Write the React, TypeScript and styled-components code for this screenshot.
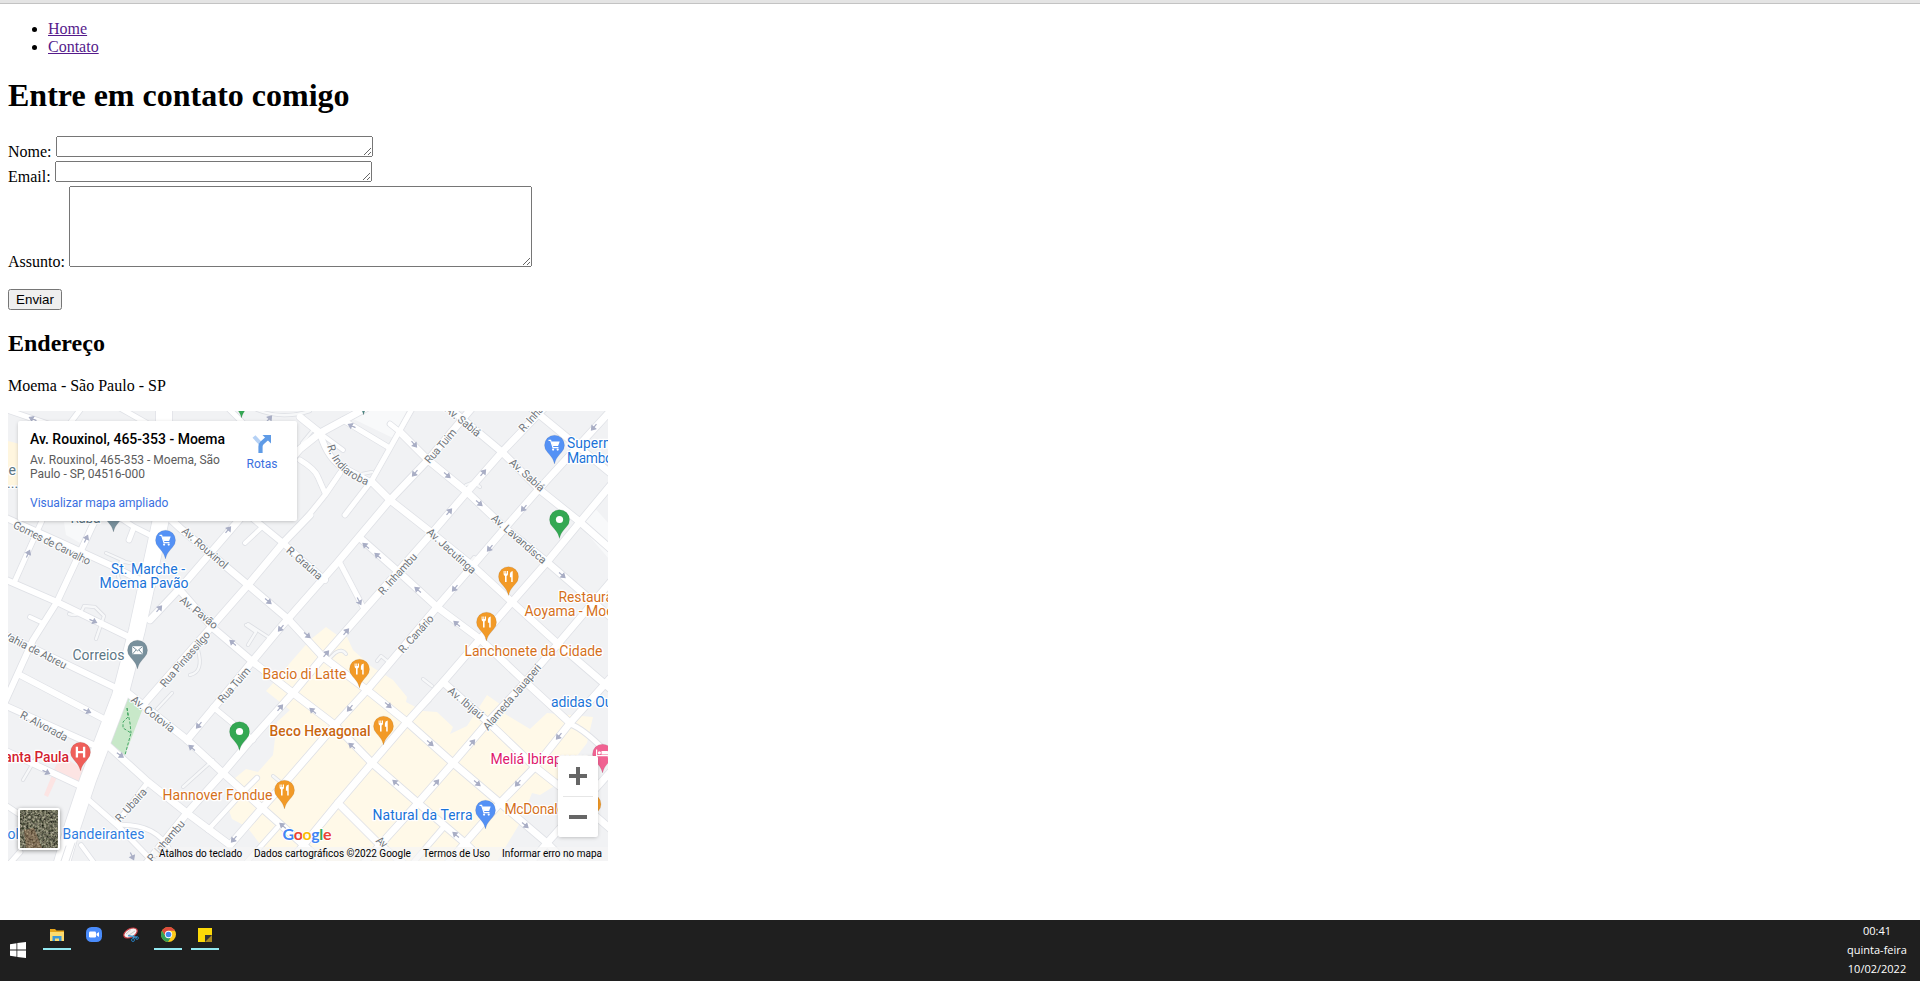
import React from "react";
import styled, { createGlobalStyle } from "styled-components";

const GlobalStyle = createGlobalStyle`
  body { margin: 0; background: #fff; color: #000; font-family: "Liberation Serif", "Times New Roman", serif; font-size: 16px; }
`;

const Screen = styled.div`
  display: flex;
  flex-direction: column;
  height: 981px;
  overflow: hidden;
`;

const BrowserEdge = styled.div`
  flex: none;
  height: 3px;
  background: #e4e4e4;
  border-bottom: 1px solid #c3c3c3;
`;

const Page = styled.main`
  flex: 1;
  min-height: 0;
  padding: 0 8px;
  overflow: hidden;
`;

const Nav = styled.ul`
  margin: 16px 0;
  padding-left: 40px;
  line-height: 18px;
`;

const NavLink = styled.a`
  color: #551a8b;
  text-decoration: underline;
`;

const Title = styled.h1`
  margin: 21.44px 0;
  font-size: 32px;
  line-height: 37px;
`;

const Subtitle = styled.h2`
  margin: 19.92px 0;
  font-size: 24px;
  line-height: 27px;
`;

const Paragraph = styled.p`
  margin: 16px 0;
  line-height: 18px;
`;

const Field = styled.textarea<{ $w: number; $h: number }>`
  box-sizing: border-box;
  width: ${(p) => p.$w}px;
  height: ${(p) => p.$h}px;
  overflow: auto;
`;

const Submit = styled.button`
  font-family: "Liberation Sans", Arial, sans-serif;
  font-size: 13.333px;
  width: 54px;
  height: 21px;
  padding: 1px 6px;
`;

const MapFrame = styled.div`
  position: relative;
  width: 600px;
  height: 450px;
  overflow: hidden;
  font-family: Roboto, sans-serif;
`;

const MapSvg = styled.svg`
  display: block;
  font-family: Roboto, sans-serif;
`;

const PlaceCard = styled.div`
  position: absolute;
  left: 10px;
  top: 10px;
  box-sizing: border-box;
  width: 279px;
  height: 100px;
  padding: 9px 12px;
  display: flex;
  justify-content: space-between;
  background: #fff;
  border-radius: 2px;
  box-shadow: 0 1px 4px -1px rgba(0, 0, 0, 0.3);
`;

const PlaceText = styled.div`
  width: 200px;
  white-space: nowrap;
`;

const PlaceName = styled.div`
  font-size: 14px;
  font-weight: 500;
  line-height: 18px;
`;

const PlaceAddress = styled.div`
  margin-top: 5px;
  font-size: 12px;
  line-height: 14px;
  color: #5b5b5b;
`;

const MapLink = styled.div`
  margin-top: 15px;
  font-size: 12px;
  line-height: 14px;
  color: #3a6fe0;
`;

const Directions = styled.div`
  display: flex;
  flex-direction: column;
  align-items: center;
  width: 46px;
  padding-top: 4px;
  font-size: 12px;
  line-height: 14px;
  color: #3a6fe0;
`;

const DirectionsIcon = styled.svg`
  margin-bottom: 3px;
`;

const ZoomPanel = styled.div`
  position: absolute;
  left: 550px;
  top: 345px;
  width: 40px;
  height: 81px;
  display: flex;
  flex-direction: column;
  align-items: center;
  background: #fff;
  border-radius: 2px;
  box-shadow: 0 1px 4px -1px rgba(0, 0, 0, 0.3);
`;

const ZoomButton = styled.div`
  flex: 1;
  display: flex;
  align-items: center;
`;

const ZoomDivider = styled.div`
  width: 30px;
  height: 1px;
  background: #e6e6e6;
`;

const Satellite = styled.div`
  position: absolute;
  left: 10px;
  top: 397px;
  width: 38px;
  height: 38px;
  border: 2px solid #fff;
  border-radius: 2px;
  overflow: hidden;
  background: #6b6b5d;
  box-shadow: 0 1px 4px rgba(0, 0, 0, 0.4);
`;

const Attribution = styled.div`
  position: absolute;
  right: 0;
  bottom: 0;
  height: 14px;
  display: flex;
  gap: 12px;
  padding: 0 6px;
  background: rgba(245, 245, 245, 0.7);
  font-size: 10px;
  line-height: 14px;
  white-space: nowrap;
`;

const Credit = styled.span<{ $w: number }>`
  width: ${(p) => p.$w}px;
`;

const Taskbar = styled.footer`
  flex: none;
  height: 61px;
  display: flex;
  align-items: flex-start;
  background: #1f1f1f;
`;

const StartButton = styled.div`
  width: 33px;
  padding: 22px 0 0 10px;
`;

const Apps = styled.div`
  display: flex;
  gap: 9px;
  flex: 1;
`;

const AppSlot = styled.div<{ $open?: boolean }>`
  width: 28px;
  height: 28px;
  display: flex;
  justify-content: center;
  align-items: flex-end;
  border-bottom: 2px solid ${(p) => (p.$open ? "#93e9f2" : "transparent")};
`;

const AppIcon = styled.svg`
  margin-bottom: 6px;
`;

const Clock = styled.div`
  width: 86px;
  padding-top: 1px;
  text-align: center;
  color: #fff;
  font-family: "Open Sans", "Noto Sans", sans-serif;
  font-size: 11px;
  line-height: 19px;
`;

type Road = { d: string; w?: number };

const mainAvenue = "M164 405L164 505L137 630L120 696L88 780L73 825L61 866";

const roads: Road[] = [
  { d: "M250 516L283 543L325 580", w: 6 },
  { d: "M261 528L245 543", w: 4 },
  { d: "M310 515L283 543L248 585L143 705" },
  { d: "M300 526L325 495L340 473", w: 5 },
  { d: "M187 740L280 628L337 563L390 500L428 460L471 409" },
  { d: "M545 407L502 452L467 492L432 533L365 609L323 657L293 693L250 741L223 773L187 813L146 864" },
  { d: "M615 406L582 442L538 490L505 528L475 563L437 607L367 690L335 725L290 777L262 808L230 845" },
  { d: "M615 480L580 522L547 562L512 602L480 639L443 682L407 722L372 763L338 803L288 864" },
  { d: "M614 578L557 645L520 688L488 722L453 763L418 803L380 845L363 864" },
  { d: "M614 674L570 723L535 767L500 803L465 843L447 864" },
  { d: "M614 768L547 843L530 863" },
  { d: "M443 828L412 864", w: 5 },
  { d: "M150 620L182 586L220 542L300 449L320 433L368 407" },
  { d: "M448 407L502 452L540 490L580 522L614 552" },
  { d: "M530 407L614 476" },
  { d: "M400 432L428 460L467 492L505 528L547 562L614 620" },
  { d: "M300 417L320 433M372 482L390 500L432 533L475 568L512 602L557 643L614 692" },
  { d: "M320 433Q328 461 346 469L372 483", w: 6 },
  { d: "M320 433L343 450", w: 4 },
  { d: "M360 538L402 575L437 607L480 639L520 677L570 723" },
  { d: "M570 724Q585 729 614 760", w: 5 },
  { d: "M163 512L180 528L248 585L288 619L323 657L367 690L407 722L453 763L500 803L547 843L568 864" },
  { d: "M178 588L213 628L253 662L293 693L335 725L372 763L418 803L465 843L487 864" },
  { d: "M124 690L143 705L185 738L223 773L262 808L325 864" },
  { d: "M443 682L488 722L535 767L577 800L614 832" },
  { d: "M105 743L148 782L187 813L230 845" },
  { d: "M148 782L117 823", w: 5 },
  { d: "M84 796L117 825L156 865", w: 5 },
  { d: "M117 825Q155 823 170 850", w: 4 },
  { d: "M213 707L253 740", w: 5 },
  { d: "M338 803L380 845L404 864" },
  { d: "M208 830L240 795L257 778", w: 4.5 },
  { d: "M245 864L277 828", w: 4.5 },
  { d: "M4 517L60 542L110 565L152 586", w: 6 },
  { d: "M4 579L57 602L135 640", w: 6 },
  { d: "M4 634L116 688", w: 6 },
  { d: "M20 675L104 719", w: 6 },
  { d: "M4 705L100 748", w: 6 },
  { d: "M4 750L85 788", w: 6 },
  { d: "M98 514L57 602L33 640L4 704", w: 6 },
  { d: "M44 516L14 583", w: 5 },
  { d: "M4 409L60 428M80 410L65 430M120 408L150 425M228 408L245 425", w: 5 },
  { d: "M413 407L390 448L372 480L345 515", w: 5 },
  { d: "M343 420L388 447", w: 5 },
  { d: "M400 432L390 424", w: 5 },
  { d: "M300 460Q315 469 318 477L325 493", w: 5 },
  { d: "M340 563L363 607", w: 5 },
  { d: "M122 519L134 527L156 538M134 527L129 540", w: 5 },
  { d: "M30 617L43 623", w: 4 },
  { d: "M4 804L28 820M4 870L20 852", w: 5 },
  { d: "M81 845L95 864", w: 4 },
];

const stubs = [
  "M157 709L172 693", "M190 675Q204 672 198 650", "M130 563L121 561Q114 579 123 583L134 587", "M69 614Q80 618 84 606L95 607L104 616L96 639", "M106 553L124 561L118 566",
  "M23 780L36 758", "M340 470Q348 471 357 475L372 472", "M328 660L335 653Q342 648 346 654",
  "M377 661L381 656L391 664", "M423 679L432 686", "M430 700L423 707", "M273 776L290 790",
  "M183 787L213 760", "M257 410Q282 420 310 411", "M302 443L312 431", "M466 485L474 482L480 487",
  "M470 562L474 557L480 560", "M246 625L256 632L248 645M268 637L248 624",
];

type Arrow = [number, number, number];

const arrows: Arrow[] = [
  [33, 419, -155], [86, 539, -65], [28, 554, -65], [228, 530, -50], [159, 609, -50], [93, 621, 25], [268, 601, 40], [281, 628, 130], [269, 419, -50],
  [352, 426, -155], [414, 444, 50], [415, 473, 130], [447, 475, 40], [483, 473, -50], [449, 512, -50], [479, 503, 40], [524, 508, 130], [594, 427, 130],
  [366, 546, -140], [378, 556, -140], [418, 590, -140], [455, 588, 130], [490, 548, 130], [359, 601, 62], [562, 575, 40], [457, 624, -140], [346, 632, -50],
  [233, 643, -140], [87, 711, 25], [120, 755, 35], [46, 772, 25], [199, 725, 130], [192, 748, -140], [280, 708, -50], [234, 839, 130], [283, 826, -140], [132, 856, 65], [307, 635, 40],
  [326, 654, -50], [350, 708, 130], [388, 705, 40], [313, 711, -140], [352, 746, -140], [430, 743, 40], [472, 743, -50], [559, 736, 130],
  [396, 783, -140], [436, 783, -50], [477, 783, 40], [518, 783, 130], [456, 835, -140], [525, 825, 40],
];

type StreetLabel = [string, number, number, number, number];

const streets: StreetLabel[] = [
  ["Gomes de Carvalho", 52, 543, 26.5, 85], ["Av. Rouxinol", 205, 548, 41, 57], ["R. Graúna", 304.5, 563, 41, 44], ["Av. Pavão", 199, 612.5, 39, 45],
  ["Rua Tuim", 440.5, 446, -49, 42], ["Av. Sabiá", 463, 421, 39, 42], ["Av. Sabiá", 527, 475, 42, 43], ["R. Inhambu", 538, 411, -48, 52],
  ["Av. Jacutinga", 451.5, 551, 42, 62], ["Av. Lavandisca", 519, 539, 41, 69], ["R. Inhambu", 397.5, 574, -48, 52], ["R. Canário", 416, 634, -48, 47],
  ["Vahia de Abreu", 35, 650, 27, 70], ["Rua Pintassilgo", 185, 659, -49, 70], ["Av. Cotovia", 153, 714, 38, 52], ["Rua Tuim", 234, 685, -49, 43],
  ["R. Alvorada", 44, 726, 28, 52], ["R. Ubaira", 131, 805, -48, 41], ["R. Inhambu", 166, 841, -49, 51], ["Av. Ibijaú", 466, 703, 40, 43],
  ["Alameda Jauaperi", 512, 697, -49.5, 83], ["Av", 382, 842, 40, 11],
];

type Poi = { t: string; x: number; y: number; c: string; w?: number; b?: boolean };

const BLUE = "#1a73d8";
const ORANGE = "#d5701b";
const SLATE = "#5c7684";

const pois: Poi[] = [
  { t: "Supermercado", x: 567, y: 448, c: BLUE, w: 91 },
  { t: "Mambo", x: 567, y: 462.5, c: BLUE, w: 46 },
  { t: "St. Marche -", x: 111, y: 574, c: BLUE, w: 74 },
  { t: "Moema Pavão", x: 99.5, y: 588, c: BLUE, w: 89 },
  { t: "Restaurante", x: 558.5, y: 602, c: ORANGE, w: 74 },
  { t: "Aoyama - Moema", x: 524.5, y: 616, c: ORANGE, w: 109 },
  { t: "Lanchonete da Cidade", x: 464.5, y: 656, c: ORANGE, w: 138 },
  { t: "Correios", x: 72.5, y: 660, c: SLATE, w: 52 },
  { t: "Bacio di Latte", x: 262.5, y: 679, c: ORANGE, w: 84 },
  { t: "Beco Hexagonal", x: 269.5, y: 736, c: "#c9660f", w: 101, b: true },
  { t: "Hannover Fondue", x: 162.5, y: 800, c: ORANGE, w: 110 },
  { t: "Santa Paula", x: -4, y: 762, c: "#d3222f", w: 73, b: true },
  { t: "ol", x: 7.5, y: 839, c: "#2f7de1" },
  { t: "Bandeirantes", x: 62.5, y: 839, c: "#2f7de1", w: 82 },
  { t: "adidas Outlet", x: 551, y: 707, c: BLUE, w: 81 },
  { t: "Meliá Ibirapuera", x: 490.5, y: 764, c: "#e0196c", w: 98 },
  { t: "McDonald's", x: 504.5, y: 814, c: ORANGE, w: 69 },
  { t: "Natural da Terra", x: 372.5, y: 820, c: BLUE, w: 100 },
  { t: "e", x: 8.5, y: 475, c: SLATE },
  { t: "...", x: 7, y: 488, c: SLATE },
  { t: "Raba", x: 70.5, y: 523, c: SLATE, w: 30 },
];

type PinKind = "cart" | "food" | "dot" | "mail" | "hospital" | "bed" | "plain";

const pinColors: Record<PinKind, string> = {
  cart: "#5491f5", food: "#f29a27", dot: "#34a853", mail: "#78909c", hospital: "#ef5f5a", bed: "#f06292", plain: "#78909c",
};

const pins: { k: PinKind; x: number; y: number; c?: string }[] = [
  { k: "dot", x: 241.5, y: 399 }, { k: "plain", x: 363.5, y: 396, c: "#4f8a86" }, { k: "plain", x: 113.5, y: 513 },
  { k: "cart", x: 165.5, y: 540 }, { k: "cart", x: 554.5, y: 445 }, { k: "dot", x: 559.5, y: 519.5 },
  { k: "food", x: 508.5, y: 576.5 }, { k: "food", x: 486.5, y: 622 }, { k: "mail", x: 137.5, y: 650 },
  { k: "hospital", x: 80.5, y: 752 }, { k: "dot", x: 239.5, y: 731.5 }, { k: "food", x: 284.5, y: 790 },
  { k: "food", x: 359.5, y: 669 }, { k: "food", x: 383.5, y: 726 }, { k: "cart", x: 485.5, y: 810 },
  { k: "bed", x: 602.5, y: 754 }, { k: "food", x: 591, y: 804 },
];

function PinGlyph({ kind }: { kind: PinKind }) {
  switch (kind) {
    case "cart":
      return (
        <g>
          <path d="M-3.2 -3.4H5.2L3.6 1H-1.9Z" fill="#fff" />
          <path d="M-6 -4.6H-3.9L-1.5 2.6H4" fill="none" stroke="#fff" strokeWidth="1.2" />
          <circle cx="-1.4" cy="4.6" r="1.1" fill="#fff" />
          <circle cx="3.2" cy="4.6" r="1.1" fill="#fff" />
        </g>
      );
    case "food":
      return (
        <g fill="#fff">
          <path d="M-4.9 -5.4H-3.9V-3H-3.2V-5.4H-2.2V-3H-1.5V-5.4H-.5V-2.4Q-.5 -.7 -1.9 -.4V5.5H-3.5V-.4Q-4.9 -.7 -4.9 -2.4Z" />
          <path d="M4.2 -5.6V5.5H2.7V.8H1.4V-2.6Q1.5 -5 4.2 -5.6Z" />
        </g>
      );
    case "dot":
      return <circle r="3.6" fill="#fff" />;
    case "mail":
      return (
        <g>
          <rect x="-5.3" y="-3.8" width="10.6" height="8" fill="#fff" />
          <path d="M-5 -3.4L0 .8L5 -3.4M-5 4L-1.5 0M5 4L1.5 0" fill="none" stroke="#78909c" />
        </g>
      );
    case "hospital":
      return <path d="M-3.6 -5.2V5.6M3.6 -5.2V5.6M-3.6 .2H3.6" stroke="#fff" strokeWidth="2.3" fill="none" />;
    case "bed":
      return (
        <g fill="#fff">
          <path d="M-6.5 -4.5H-5.3V1H6.5V3.8H5.3V2.3H-5.3V3.8H-6.5Z" />
          <circle cx="-3.1" cy="-1.2" r="1.5" />
          <path d="M-1 -3H4.5Q6.5 -2.8 6.5 -.5V.4H-1Z" />
        </g>
      );
    default:
      return null;
  }
}

function CityMap() {
  return (
    <MapSvg width="600" height="450" viewBox="8 411 600 450">
      <rect x="8" y="411" width="600" height="450" fill="#f1f2f4" />
      <path d="M8 441L27 446V482L8 488Z" fill="#fff6df" />
      <path d="M593 506L610 525V560L578 523ZM64 522H94L82 544L66 535ZM350 411H407L393 438L345 415Z" fill="#f8f9fa" />
      <path
        d="M326 627L337 635L347 637L353 650L372 667L393 680L407 697L406 702L423 711L437 712L453 727L450 734L467 726L487 695L507 709L505 714L530 729L547 713L593 717L587 743L570 765L560 771L556 785L540 795L532 793L520 823L497 861H273L247 827L232 819L227 805L240 790L235 778L246 769L258 772L273 755L277 722L290 710L266 691L276 680L290 663L310 640Z"
        fill="#fff9e8"
      />
      <path d="M64 757L84 770L80 784L58 775L48 797L44 795L56 765Z" fill="#fce4e3" />
      <path d="M128 696L143 708L125 755L110 743Z" fill="#c8e8c9" />
      <g fill="none" strokeLinecap="round" strokeLinejoin="round">
        {stubs.map((d) => <path key={d} d={d} stroke="#dcdee3" strokeWidth="4" />)}
        {roads.map((r) => <path key={r.d} d={r.d} stroke="#dfe1e6" strokeWidth={(r.w ?? 6.8) + 1.6} />)}
        <path d={mainAvenue} stroke="#dfe1e6" strokeWidth="17.5" />
        {stubs.map((d) => <path key={d} d={d} stroke="#f7f8f9" strokeWidth="2.4" />)}
        {roads.map((r) => <path key={r.d} d={r.d} stroke="#fff" strokeWidth={r.w ?? 6.8} />)}
        <path d={mainAvenue} stroke="#fff" strokeWidth="16" />
        <path d="M75 843L69 861M66 846L61 861" stroke="#e1e3e7" strokeWidth="1" />
      </g>
      <path d="M127 708L128 717L123 722V728L131 733L125 755M127 708L130 723L131 733" fill="none" stroke="#46a866" strokeDasharray="3 1.6" />
      {arrows.map(([x, y, a]) => (
        <path key={`${x}-${y}`} transform={`translate(${x} ${y}) rotate(${a}) scale(.92)`} d="M-4.2 0H1.5M.4 -2.6L4.2 0L.4 2.6Z" fill="#a9aec5" stroke="#a9aec5" strokeWidth="1.3" />
      ))}
      <g fill="#70757a" fontSize="11" stroke="#fbfcfd" strokeWidth="2.2" strokeLinejoin="round" style={{ paintOrder: "stroke" }}>
        {streets.map(([t, x, y, a, w]) => (
          <text key={`${t}${x}`} transform={`translate(${x} ${y}) rotate(${a})`} y="3.8" textAnchor="middle" textLength={w}>{t}</text>
        ))}
        <path id="indiaroba" d="M327 446Q334 473 366 485" fill="none" stroke="none" />
        <text><textPath href="#indiaroba">R. Indiaroba</textPath></text>
      </g>
      {pins.map((p) => (
        <g key={`${p.x}-${p.y}`} transform={`translate(${p.x} ${p.y})`}>
          <path d="M0 19C-1.5 13 -4 11 -7 7.3A10 10 0 1 1 7 7.3C4 11 1.5 13 0 19Z" fill={p.c ?? pinColors[p.k]} stroke="#00000022" strokeWidth=".6" />
          <PinGlyph kind={p.k} />
        </g>
      ))}
      <g fontSize="14" stroke="#fff" strokeWidth="2.6" strokeLinejoin="round" style={{ paintOrder: "stroke" }}>
        {pois.map((p) => (
          <text key={p.t} x={p.x} y={p.y} fill={p.c} fontWeight={p.b ? 500 : 400} textLength={p.w}>{p.t}</text>
        ))}
      </g>
      <text x="282.5" y="840" fontFamily="Lato, sans-serif" fontWeight="700" fontSize="16" textLength="49" stroke="#fff" strokeWidth="1.8" style={{ paintOrder: "stroke" }}>
        <tspan fill="#4285f4">G</tspan><tspan fill="#ea4335">o</tspan><tspan fill="#fbbc05">o</tspan><tspan fill="#4285f4">g</tspan><tspan fill="#34a853">l</tspan><tspan fill="#ea4335">e</tspan>
      </text>
    </MapSvg>
  );
}

function MapEmbed() {
  return (
    <MapFrame>
      <CityMap />
      <PlaceCard>
        <PlaceText>
          <PlaceName>Av. Rouxinol, 465-353 - Moema</PlaceName>
          <PlaceAddress>Av. Rouxinol, 465-353 - Moema, São<br />Paulo - SP, 04516-000</PlaceAddress>
          <MapLink>Visualizar mapa ampliado</MapLink>
        </PlaceText>
        <Directions>
          <DirectionsIcon width="20" height="20" viewBox="0 0 20 20">
            <path d="M2 2.5L9 10" stroke="#b5d1f5" strokeWidth="4" fill="none" />
            <path d="M8.5 19V12.5Q8.5 10.5 10 9L15 4.5" stroke="#5f9be6" strokeWidth="4.2" fill="none" />
            <path d="M10.5 1H19V9.5Z" fill="#5f9be6" />
          </DirectionsIcon>
          Rotas
        </Directions>
      </PlaceCard>
      <Satellite>
        <svg width="38" height="38">
          <filter id="terrain" x="0" y="0" width="100%" height="100%" colorInterpolationFilters="sRGB">
            <feTurbulence type="fractalNoise" baseFrequency=".45" numOctaves="4" seed="4" />
            <feColorMatrix values=".9 0 0 0 -.02  .87 .05 0 0 -.03  .78 0 .05 0 -.06  0 0 0 0 1" />
          </filter>
          <rect width="38" height="38" filter="url(#terrain)" />
          <path d="M4 20L14 18L22 38H6Z" fill="#a56c4b" opacity=".3" />
        </svg>
      </Satellite>
      <ZoomPanel>
        <ZoomButton><svg width="18" height="18"><path d="M0 9H18M9 0V18" stroke="#666" strokeWidth="4" /></svg></ZoomButton>
        <ZoomDivider />
        <ZoomButton><svg width="18" height="18"><path d="M0 9H18" stroke="#666" strokeWidth="4" /></svg></ZoomButton>
      </ZoomPanel>
      <Attribution>
        <Credit $w={83}>Atalhos do teclado</Credit>
        <Credit $w={157}>Dados cartográficos ©2022 Google</Credit>
        <Credit $w={67}>Termos de Uso</Credit>
        <Credit $w={100}>Informar erro no mapa</Credit>
      </Attribution>
    </MapFrame>
  );
}

export default function App() {
  return (
    <>
      <GlobalStyle />
      <Screen>
        <BrowserEdge />
        <Page>
          <Nav>
            <li><NavLink href="#home">Home</NavLink></li>
            <li><NavLink href="#contato">Contato</NavLink></li>
          </Nav>
          <Title>Entre em contato comigo</Title>
          <form>
            Nome: <Field $w={317} $h={21} /><br />
            Email: <Field $w={317} $h={21} /><br />
            Assunto: <Field $w={463} $h={81} /><br /><br />
            <Submit type="button">Enviar</Submit>
          </form>
          <Subtitle>Endereço</Subtitle>
          <Paragraph>Moema - São Paulo - SP</Paragraph>
          <MapEmbed />
        </Page>
        <Taskbar>
          <StartButton>
            <svg width="16" height="16" viewBox="0 0 16 16" fill="#fff">
              <path d="M0 2.2L6.5 1.3V7.5H0ZM7.3 1.1L16 0V7.5H7.3ZM0 8.4H6.5V14.7L0 13.8ZM7.3 8.4H16V16L7.3 14.9Z" />
            </svg>
          </StartButton>
          <Apps>
            <AppSlot $open>
              <AppIcon width="14" height="14" viewBox="0 0 14 14">
                <path d="M0 1H5L6.5 2.5H14V13H0Z" fill="#e6a51b" />
                <path d="M0 4H14V13H0Z" fill="#fddb6d" />
                <path d="M2.5 13V8H11.5V13H9V10.5H5V13Z" fill="#3c97d6" />
              </AppIcon>
            </AppSlot>
            <AppSlot>
              <AppIcon width="16" height="15" viewBox="0 0 16 15">
                <rect width="16" height="15" rx="5.5" fill="#4a8cfb" />
                <rect x="3" y="4.5" width="7" height="6" rx="1.2" fill="#fff" />
                <path d="M10.5 6.8L13 5V10L10.5 8.3Z" fill="#fff" />
              </AppIcon>
            </AppSlot>
            <AppSlot>
              <AppIcon width="16" height="15" viewBox="0 0 16 15">
                <ellipse cx="7.5" cy="6" rx="7.2" ry="4.2" transform="rotate(-28 7.5 6)" fill="#f5f2f2" stroke="#c93a40" strokeWidth="1.2" />
                <path d="M3 7L8 2.5M6 8L12 4" stroke="#c9c5c5" />
                <path d="M5 8.5L14 10.5M10.5 8V12" stroke="#4e9bd0" strokeWidth="1.3" />
                <circle cx="10" cy="13" r="1.5" fill="none" stroke="#2478b5" />
                <circle cx="14" cy="11" r="1.4" fill="none" stroke="#2478b5" />
              </AppIcon>
            </AppSlot>
            <AppSlot $open>
              <AppIcon width="15" height="15" viewBox="0 0 30 30">
                <circle cx="15" cy="15" r="15" fill="#fbc91b" />
                <path d="M2 7.5A15 15 0 0 1 28 7.5H15L9 18Z" fill="#dd4b3e" />
                <path d="M2 7.5A15 15 0 0 0 14 30L21 18.5H9Z" fill="#34a056" />
                <circle cx="15" cy="15" r="7.3" fill="#fff" />
                <circle cx="15" cy="15" r="5.6" fill="#4485ee" />
              </AppIcon>
            </AppSlot>
            <AppSlot $open>
              <AppIcon width="14" height="14" viewBox="0 0 14 14">
                <path d="M0 0H14V14H0Z" fill="#fcd908" />
                <path d="M7 7H14V14H7Z" fill="#343434" />
                <path d="M7 14L14 7V14Z" fill="#a98a22" />
              </AppIcon>
            </AppSlot>
          </Apps>
          <Clock>
            <div>00:41</div>
            <div>quinta-feira</div>
            <div>10/02/2022</div>
          </Clock>
        </Taskbar>
      </Screen>
    </>
  );
}
